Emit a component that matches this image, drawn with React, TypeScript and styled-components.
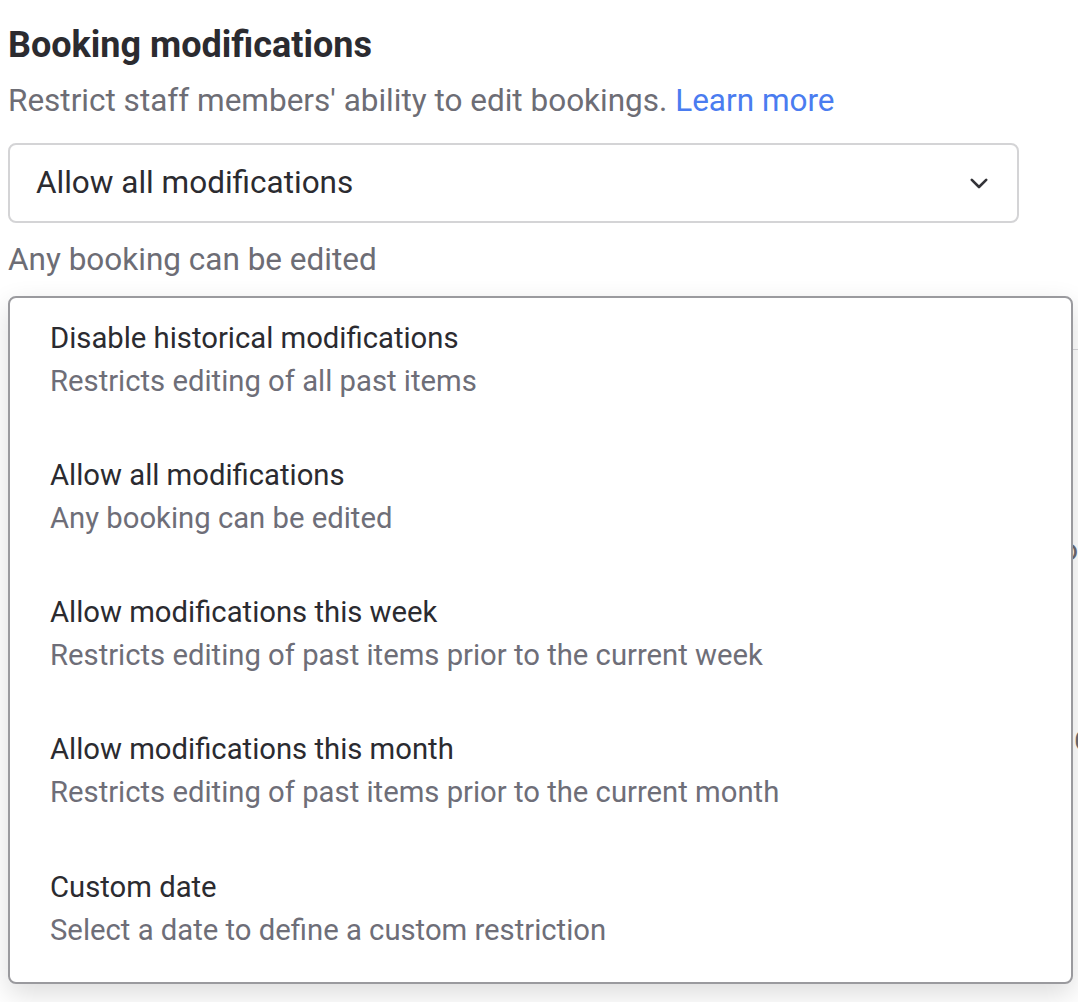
import React, { useState } from "react";
import styled, { createGlobalStyle } from "styled-components";

const GlobalStyle = createGlobalStyle`
  html, body {
    margin: 0;
    padding: 0;
    background: #ffffff;
    overflow: hidden;
    font-family: Roboto, "Liberation Sans", Arial, sans-serif;
  }
`;

type Option = {
  value: string;
  label: string;
  description: string;
};

const options: Option[] = [
  {
    value: "historical",
    label: "Disable historical modifications",
    description: "Restricts editing of all past items",
  },
  {
    value: "all",
    label: "Allow all modifications",
    description: "Any booking can be edited",
  },
  {
    value: "week",
    label: "Allow modifications this week",
    description: "Restricts editing of past items prior to the current week",
  },
  {
    value: "month",
    label: "Allow modifications this month",
    description: "Restricts editing of past items prior to the current month",
  },
  {
    value: "custom",
    label: "Custom date",
    description: "Select a date to define a custom restriction",
  },
];

const App: React.FC = () => {
  const [selected, setSelected] = useState("all");
  const [isOpen, setIsOpen] = useState(true);

  const current = options.find((o) => o.value === selected) ?? options[1];

  return (
    <>
      <GlobalStyle />
      <Page>
        <Title>Booking modifications</Title>
        <Subtitle>
          Restrict staff members' ability to edit bookings.{" "}
          <Link href="#">Learn more</Link>
        </Subtitle>

        <SelectWrap>
          <SelectBox onClick={() => setIsOpen(!isOpen)}>
            <SelectValue>{current.label}</SelectValue>
            <svg width="18" height="11" viewBox="0 0 18 11" fill="none">
              <path
                d="M1.8 1.8l7.2 7.2 7.2-7.2"
                stroke="#333338"
                strokeWidth="2.6"
                strokeLinecap="round"
                strokeLinejoin="round"
              />
            </svg>
          </SelectBox>
          <Hint>{current.description}</Hint>

          {/* rest of the settings page, mostly hidden under the open menu */}
          <Behind>
            <BehindRow $height={191} $indent={0} $align="end">
              o
            </BehindRow>
            <BehindRow $height={40} $indent={1066} $align="start">
              C
            </BehindRow>
          </Behind>

          {isOpen && (
            <Menu>
              {options.map((o) => (
                <MenuItem
                  key={o.value}
                  onClick={() => {
                    setSelected(o.value);
                    setIsOpen(false);
                  }}
                >
                  <ItemLabel>{o.label}</ItemLabel>
                  <ItemDescription>{o.description}</ItemDescription>
                </MenuItem>
              ))}
            </Menu>
          )}
        </SelectWrap>
      </Page>
    </>
  );
};

export default App;

const Page = styled.div`
  padding: 24px 0 0 8px;
  height: 1002px;
  box-sizing: border-box;
`;

const Title = styled.h2`
  margin: 0;
  font-size: 36px;
  line-height: 42px;
  font-weight: 700;
  color: #2b2b30;
`;

const Subtitle = styled.p`
  margin: 16px 0 0 0;
  font-size: 31.5px;
  line-height: 38px;
  color: #6d6d75;
`;

const Link = styled.a`
  color: #4a7cf0;
  text-decoration: none;
`;

const SelectWrap = styled.div`
  position: relative;
`;

const SelectBox = styled.div`
  margin-top: 23px;
  width: 1011px;
  height: 80px;
  box-sizing: border-box;
  border: 2px solid #d4d4d6;
  border-radius: 8px;
  display: flex;
  align-items: center;
  justify-content: space-between;
  padding: 0 29px 0 26px;
  cursor: pointer;
`;

const SelectValue = styled.span`
  font-size: 31.5px;
  line-height: 38px;
  color: #2b2b30;
`;

const Hint = styled.div`
  margin-top: 18px;
  font-size: 31.5px;
  line-height: 38px;
  color: #6d6d75;
`;

const Behind = styled.div`
  margin-top: 70px;
  border-top: 1px solid #d8d8dc;
  padding-top: 180px;
  display: flex;
  flex-direction: column;
`;

const BehindRow = styled.div<{ $height: number; $indent: number; $align: "start" | "end" }>`
  height: ${(p) => p.$height}px;
  padding-left: ${(p) => p.$indent}px;
  display: flex;
  justify-content: ${(p) => (p.$align === "end" ? "flex-end" : "flex-start")};
  font-size: 30px;
  line-height: 40px;
  color: #6a6a70;
  white-space: nowrap;
  overflow: hidden;
`;

const Menu = styled.div`
  position: absolute;
  top: 153px;
  left: 0;
  width: 1065px;
  box-sizing: border-box;
  background: #ffffff;
  border: 2px solid #9a9a9e;
  border-radius: 8px;
  box-shadow: 0 10px 28px rgba(0, 0, 0, 0.14);
  padding: 18.5px 0 30.3px 0;
  display: flex;
  flex-direction: column;
  gap: 51.3px;
`;

const MenuItem = styled.div`
  padding: 0 40px;
  display: flex;
  flex-direction: column;
  cursor: pointer;
`;

const ItemLabel = styled.div`
  font-size: 29.25px;
  line-height: 43px;
  color: #2b2b30;
`;

const ItemDescription = styled.div`
  font-size: 29.25px;
  line-height: 43px;
  color: #6e6e78;
`;
